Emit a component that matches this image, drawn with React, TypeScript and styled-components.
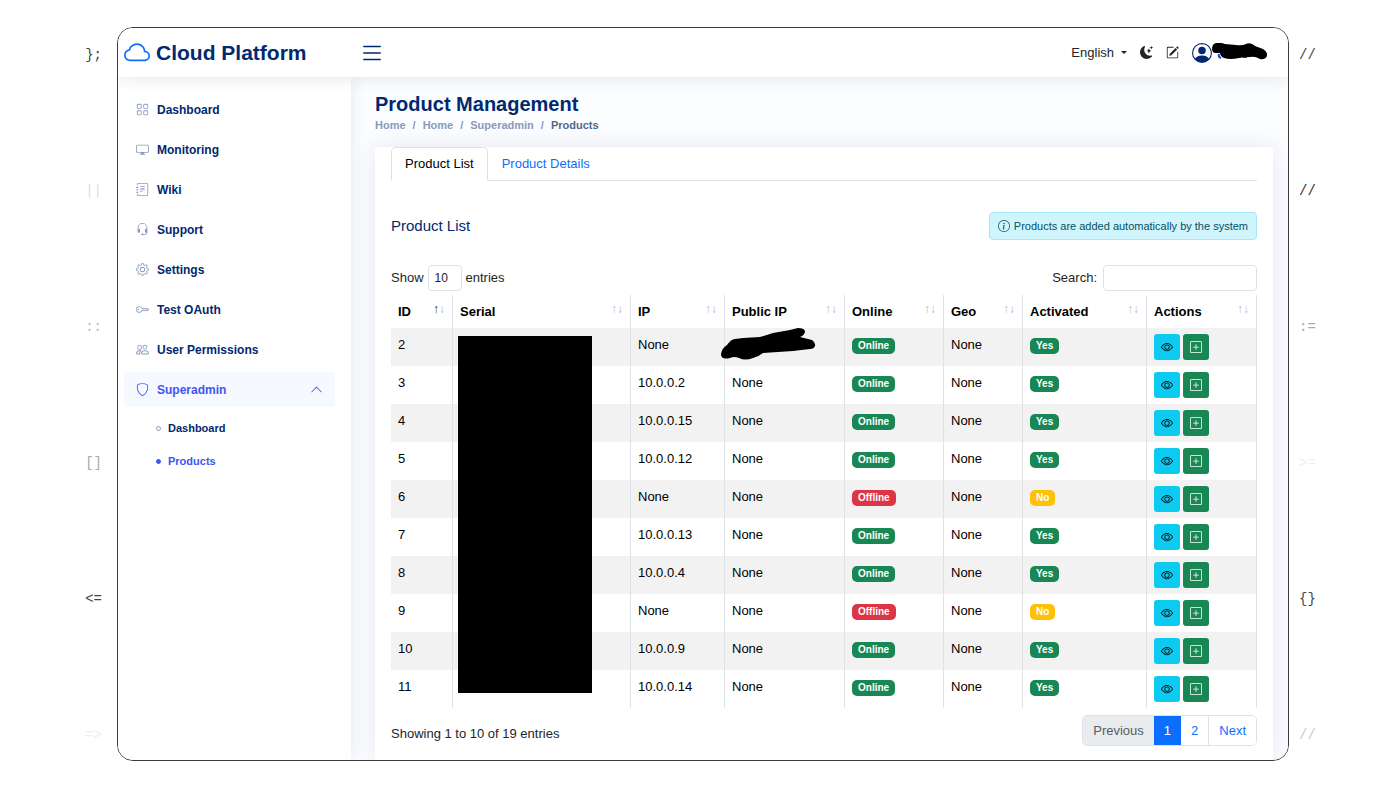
import React from 'react';
import styled, { createGlobalStyle } from 'styled-components';
import {
  BsCloud, BsList, BsMoonStarsFill, BsPencilSquare, BsPersonCircle, BsGrid, BsDisplay,
  BsJournalText, BsHeadset, BsGear, BsKey, BsPeople, BsShield, BsChevronUp,
  BsInfoCircle, BsEye, BsPlusSquare,
} from 'react-icons/bs';

const GlobalStyle = createGlobalStyle`
  *, *::before, *::after { box-sizing: border-box; }
  body {
    margin: 0;
    background: #fff;
    color: #212529;
    font: 13px/20px "Liberation Sans", Arial, sans-serif;
  }
  button, input, select { font: inherit; color: inherit; }
  a { text-decoration: none; color: inherit; }
  ul, ol { list-style: none; margin: 0; padding: 0; }
  svg { display: block; flex: none; }
`;

const Page = styled.div`
  display: grid;
  grid-template-columns: 117px minmax(0, 1fr) 111px;
  padding: 27px 0;
`;

const Gutter = styled.div<{ $side: 'left' | 'right' }>`
  display: flex;
  flex-direction: column;
  justify-content: space-between;
  align-items: ${p => (p.$side === 'left' ? 'flex-end' : 'flex-start')};
  padding: ${p => (p.$side === 'left' ? '18px 15px 16px 0' : '18px 0 16px 10px')};
`;

const Glyphs = styled.span<{ $tone: string }>`
  font: 14px/20px "Liberation Mono", monospace;
  color: ${p => p.$tone};
`;

const Frame = styled.div`
  border: 1px solid #3c3c3c;
  border-radius: 16px;
  overflow: hidden;
`;

const Header = styled.header`
  position: relative;
  z-index: 2;
  display: flex;
  align-items: center;
  height: 49px;
  padding: 0 21px 0 6px;
  background: #fff;
  box-shadow: 0 2px 16px rgba(1, 41, 112, 0.1);
`;

const Brand = styled.a`
  display: flex;
  align-items: center;
  gap: 6px;
  width: 235px;
  color: #012970;
  font-size: 21px;
  line-height: 26px;
  font-weight: 700;
`;

const IconButton = styled.button`
  display: flex;
  padding: 0;
  border: 0;
  background: none;
  color: #012970;
`;

const HeaderTools = styled.div`
  display: flex;
  align-items: center;
  margin-left: auto;
  gap: 13px;
  color: #212529;
`;

const LanguageButton = styled.button`
  display: flex;
  align-items: center;
  gap: 7px;
  padding: 0;
  border: 0;
  background: none;
  &::after {
    content: '';
    border: 3px solid transparent;
    border-top-color: currentColor;
    border-bottom: 0;
  }
`;

const Profile = styled.a`
  display: flex;
  align-items: center;
  color: #012970;
`;

const Body = styled.div`
  display: grid;
  grid-template-columns: 233px minmax(0, 1fr);
`;

const Sidebar = styled.aside`
  position: relative;
  z-index: 1;
  padding: 15px 16px 16px 6px;
  background: #fff;
  box-shadow: 0 0 16px rgba(1, 41, 112, 0.1);
`;

const NavList = styled.ul`
  display: grid;
  gap: 5px;
`;

const NavLink = styled.a<{ $active?: boolean }>`
  display: flex;
  align-items: center;
  gap: 8px;
  height: 35px;
  padding: 0 12px;
  border-radius: 3px;
  font-size: 12px;
  font-weight: 700;
  color: ${p => (p.$active ? '#4154f1' : '#012970')};
  background: ${p => (p.$active ? '#f6f9ff' : 'transparent')};
  & > svg { color: ${p => (p.$active ? '#4154f1' : '#899bbd')}; }
  & > svg:last-child:not(:first-child) { margin-left: auto; }
`;

const SubList = styled.ul`
  display: grid;
  gap: 13px;
  padding: 11px 0 0 32px;
`;

const SubLink = styled.a<{ $active?: boolean }>`
  display: flex;
  align-items: center;
  gap: 7px;
  font-size: 11px;
  font-weight: 700;
  color: ${p => (p.$active ? '#4154f1' : '#012970')};
  &::before {
    content: '';
    width: 5px;
    height: 5px;
    border: 1px solid ${p => (p.$active ? '#4154f1' : '#899bbd')};
    border-radius: 50%;
    background: ${p => (p.$active ? '#4154f1' : 'transparent')};
  }
`;

const Main = styled.main`
  display: flex;
  flex-direction: column;
  padding: 15px 15px 0 24px;
  background: #fcfdff;
`;

const PageTitle = styled.h1`
  margin: 0;
  font-size: 20px;
  line-height: 24px;
  color: #012970;
`;

const Breadcrumb = styled.ol`
  display: flex;
  font-size: 11px;
  line-height: 18px;
  font-weight: 700;
  color: #899bbd;
  li + li::before { content: '/'; padding: 0 7px; }
`;

const Current = styled.span`
  color: #51678f;
`;

const Card = styled.section`
  margin-top: 13px;
  padding: 0 16px 14px;
  border-radius: 4px 4px 0 0;
  background: #fff;
  box-shadow: 0 0 24px rgba(1, 41, 112, 0.1);
`;

const Tabs = styled.div`
  display: flex;
  border-bottom: 1px solid #dee2e6;
`;

const Tab = styled.button<{ $active?: boolean }>`
  height: 34px;
  margin-bottom: -1px;
  padding: 0 13px;
  border: 1px solid ${p => (p.$active ? '#dee2e6' : 'transparent')};
  border-bottom-color: ${p => (p.$active ? '#fff' : 'transparent')};
  border-radius: 5px 5px 0 0;
  background: ${p => (p.$active ? '#fff' : 'transparent')};
  color: ${p => (p.$active ? '#000' : '#0d6efd')};
`;

const CardHead = styled.div`
  display: flex;
  justify-content: space-between;
  align-items: center;
  margin-top: 31px;
`;

const CardTitle = styled.h2`
  margin: 0;
  font-size: 15px;
  line-height: 20px;
  font-weight: 400;
  color: #012970;
`;

const Notice = styled.div`
  display: flex;
  align-items: center;
  gap: 4px;
  height: 28px;
  padding: 0 8px;
  border: 1px solid #9eeaf9;
  border-radius: 4px;
  background: #cff4fc;
  color: #055160;
  font-size: 11px;
`;

const Controls = styled.div`
  display: flex;
  justify-content: space-between;
  margin-top: 25px;
`;

const Control = styled.label`
  display: flex;
  align-items: center;
  gap: 4px;
`;

const LengthSelect = styled.select`
  appearance: none;
  width: 34px;
  height: 26px;
  padding: 0 6px;
  border: 1px solid #dee2e6;
  border-radius: 4px;
  background: #fff;
  font-size: 12px;
`;

const SearchInput = styled.input`
  width: 154px;
  height: 26px;
  margin-left: 2px;
  padding: 0 6px;
  border: 1px solid #dee2e6;
  border-radius: 4px;
  background: #fff;
  font-size: 12px;
`;

const Table = styled.table`
  width: 100%;
  margin-top: 4px;
  border-collapse: separate;
  border-spacing: 0;
  table-layout: fixed;
  color: #000;
`;

const HeadCell = styled.th<{ $width: number }>`
  width: ${p => p.$width}px;
  height: 33px;
  padding: 0 7px;
  border-right: 1px solid #dee2e6;
  text-align: left;
`;

const HeadLabel = styled.div`
  display: flex;
  justify-content: space-between;
`;

const Sort = styled.span<{ $asc?: boolean }>`
  display: flex;
  line-height: 14px;
  font-size: 12px;
  font-weight: 400;
  color: #bbb;
  & > span:first-child { color: ${p => (p.$asc ? '#333' : 'inherit')}; }
`;

const Row = styled.tr`
  &:nth-child(odd) { background: #f2f2f2; }
`;

const Cell = styled.td`
  position: relative;
  height: 38px;
  padding: 6px 7px;
  border-right: 1px solid #dee2e6;
  line-height: 22px;
  vertical-align: top;
`;

const Badge = styled.span<{ $tone: string }>`
  display: block;
  width: fit-content;
  height: 16px;
  margin-top: 4px;
  padding: 0 6px;
  border-radius: 5px;
  background: ${p => p.$tone};
  color: #fff;
  font-size: 10px;
  line-height: 16px;
  font-weight: 700;
`;

const Actions = styled.div`
  display: flex;
  gap: 3px;
`;

const ActionButton = styled.button<{ $tone: string; $ink: string }>`
  display: grid;
  place-items: center;
  width: 26px;
  height: 26px;
  padding: 0;
  border: 0;
  border-radius: 3px;
  background: ${p => p.$tone};
  color: ${p => p.$ink};
`;

const SerialMask = styled.div`
  position: absolute;
  z-index: 1;
  top: 8px;
  left: 5px;
  width: 134px;
  height: 357px;
  background: #000;
`;

const IpMask = styled.svg`
  position: absolute;
  top: 0;
  left: -4px;
`;

const CardFoot = styled.div`
  display: flex;
  justify-content: space-between;
  align-items: flex-end;
  margin-top: 7px;
  line-height: 24px;
`;

const Pagination = styled.ul`
  display: flex;
  overflow: hidden;
  border: 1px solid #dee2e6;
  border-radius: 5px;
`;

const PageButton = styled.button<{ $active?: boolean }>`
  display: block;
  height: 29px;
  padding: 0 10px;
  border: 0;
  background: ${p => (p.$active ? '#0d6efd' : '#fff')};
  color: ${p => (p.$active ? '#fff' : '#0d6efd')};
  &:disabled { background: #e9ecef; color: #595c5f; }
  li:last-child > & { border-left: 1px solid #dee2e6; }
`;

const leftGlyphs: [string, string][] = [
  ['};', '#444'], ['||', '#ddd'], ['::', '#bbb'], ['[]', '#aaa'], ['<=', '#444'], ['=>', '#eee'],
];
const rightGlyphs: [string, string][] = [
  ['//', '#444'], ['//', '#333'], [':=', '#aaa'], ['>=', '#eee'], ['{}', '#444'], ['//', '#ccc'],
];

const navItems = [
  { label: 'Dashboard', Icon: BsGrid },
  { label: 'Monitoring', Icon: BsDisplay },
  { label: 'Wiki', Icon: BsJournalText },
  { label: 'Support', Icon: BsHeadset },
  { label: 'Settings', Icon: BsGear },
  { label: 'Test OAuth', Icon: BsKey },
  { label: 'User Permissions', Icon: BsPeople },
];

const columns: [string, number][] = [
  ['ID', 62], ['Serial', 178], ['IP', 94], ['Public IP', 120],
  ['Online', 99], ['Geo', 79], ['Activated', 124], ['Actions', 110],
];

const products = [
  { id: 2, ip: 'None', ok: true },
  { id: 3, ip: '10.0.0.2', ok: true },
  { id: 4, ip: '10.0.0.15', ok: true },
  { id: 5, ip: '10.0.0.12', ok: true },
  { id: 6, ip: 'None', ok: false },
  { id: 7, ip: '10.0.0.13', ok: true },
  { id: 8, ip: '10.0.0.4', ok: true },
  { id: 9, ip: 'None', ok: false },
  { id: 10, ip: '10.0.0.9', ok: true },
  { id: 11, ip: '10.0.0.14', ok: true },
];

export default function App() {
  return (
    <Page>
      <GlobalStyle />
      <Gutter $side="left" aria-hidden="true">
        {leftGlyphs.map(([text, tone], i) => <Glyphs key={i} $tone={tone}>{text}</Glyphs>)}
      </Gutter>
      <Frame>
        <Header>
          <Brand href="#"><BsCloud size={26} color="#0d6efd" />Cloud Platform</Brand>
          <IconButton aria-label="Toggle sidebar"><BsList size={26} /></IconButton>
          <HeaderTools>
            <LanguageButton>English</LanguageButton>
            <IconButton aria-label="Dark mode"><BsMoonStarsFill size={13} color="#212529" /></IconButton>
            <IconButton aria-label="Edit"><BsPencilSquare size={13} color="#212529" /></IconButton>
            <Profile href="#" aria-label="Profile">
              <BsPersonCircle size={20} />
              <svg width="55" height="20" viewBox="0 0 55 20">
                <path d="M7 11 q-1 3 2 4 M31 14 h4" fill="none" stroke="#0d4fd0" strokeWidth="2" />
                <path
                  d="M0 6 Q0 1 4 0 Q8 -1 13 1 L24 2 Q30 3 34 1 Q39 -1 43 3 L51 6 Q56 9 55 13 Q53 17 48 16 Q43 13 38 14 Q32 14 27 15 Q18 17 12 15 Q8 13 8 10 L3 10 Q0 9 0 6 Z"
                  fill="#000"
                />
              </svg>
            </Profile>
          </HeaderTools>
        </Header>
        <Body>
          <Sidebar>
            <nav>
              <NavList>
                {navItems.map(({ label, Icon }) => (
                  <li key={label}><NavLink href="#"><Icon size={13} />{label}</NavLink></li>
                ))}
                <li>
                  <NavLink href="#" $active><BsShield size={13} />Superadmin<BsChevronUp size={13} /></NavLink>
                  <SubList>
                    <li><SubLink href="#">Dashboard</SubLink></li>
                    <li><SubLink href="#" $active>Products</SubLink></li>
                  </SubList>
                </li>
              </NavList>
            </nav>
          </Sidebar>
          <Main>
            <PageTitle>Product Management</PageTitle>
            <Breadcrumb>
              <li><a href="#">Home</a></li>
              <li><a href="#">Home</a></li>
              <li><a href="#">Superadmin</a></li>
              <li><Current>Products</Current></li>
            </Breadcrumb>
            <Card>
              <Tabs role="tablist">
                <Tab role="tab" aria-selected="true" $active>Product List</Tab>
                <Tab role="tab" aria-selected="false">Product Details</Tab>
              </Tabs>
              <CardHead>
                <CardTitle>Product List</CardTitle>
                <Notice><BsInfoCircle size={12} />Products are added automatically by the system</Notice>
              </CardHead>
              <Controls>
                <Control>
                  Show
                  <LengthSelect defaultValue="10"><option>10</option><option>25</option><option>50</option></LengthSelect>
                  entries
                </Control>
                <Control>Search:<SearchInput type="search" /></Control>
              </Controls>
              <Table>
                <thead>
                  <tr>
                    {columns.map(([label, width], i) => (
                      <HeadCell key={label} $width={width}>
                        <HeadLabel>{label}<Sort $asc={i === 0} aria-hidden="true"><span>↑</span><span>↓</span></Sort></HeadLabel>
                      </HeadCell>
                    ))}
                  </tr>
                </thead>
                <tbody>
                  {products.map((p, i) => (
                    <Row key={p.id}>
                      <Cell>{p.id}</Cell>
                      <Cell>{i === 0 && <SerialMask />}</Cell>
                      <Cell>{p.ip}</Cell>
                      <Cell>
                        {i === 0 ? (
                          <IpMask width="95" height="33" viewBox="0 0 95 33">
                            <path d="M0 26 Q1 20 6 17 Q10 11 14 11 L22 10 L39 9 L52 5 L69 2 L77 0 Q83 0 84 3 Q84 7 79 9 L91 12 Q95 15 94 18 Q93 21 89 21 L72 23 L42 25 Q37 29 32 30 Q24 33 18 30 Q13 28 9 30 Q0 32 0 26 Z" />
                          </IpMask>
                        ) : 'None'}
                      </Cell>
                      <Cell><Badge $tone={p.ok ? '#198754' : '#dc3545'}>{p.ok ? 'Online' : 'Offline'}</Badge></Cell>
                      <Cell>None</Cell>
                      <Cell><Badge $tone={p.ok ? '#198754' : '#ffc107'}>{p.ok ? 'Yes' : 'No'}</Badge></Cell>
                      <Cell>
                        <Actions>
                          <ActionButton $tone="#0dcaf0" $ink="#000" aria-label="View product"><BsEye size={12} /></ActionButton>
                          <ActionButton $tone="#198754" $ink="#fff" aria-label="Add to product"><BsPlusSquare size={12} /></ActionButton>
                        </Actions>
                      </Cell>
                    </Row>
                  ))}
                </tbody>
              </Table>
              <CardFoot>
                <span>Showing 1 to 10 of 19 entries</span>
                <nav aria-label="Table pages">
                  <Pagination>
                    <li><PageButton disabled>Previous</PageButton></li>
                    <li><PageButton $active>1</PageButton></li>
                    <li><PageButton>2</PageButton></li>
                    <li><PageButton>Next</PageButton></li>
                  </Pagination>
                </nav>
              </CardFoot>
            </Card>
          </Main>
        </Body>
      </Frame>
      <Gutter $side="right" aria-hidden="true">
        {rightGlyphs.map(([text, tone], i) => <Glyphs key={i} $tone={tone}>{text}</Glyphs>)}
      </Gutter>
    </Page>
  );
}
